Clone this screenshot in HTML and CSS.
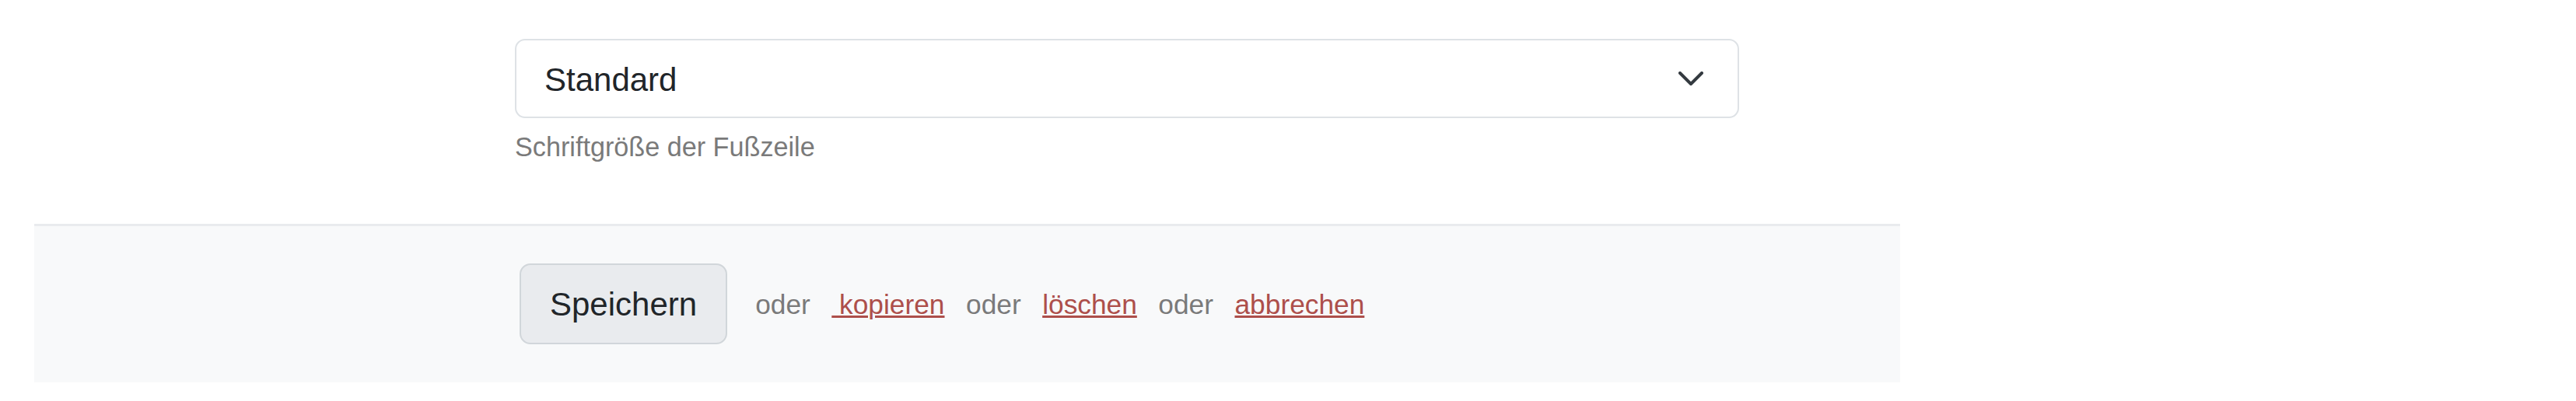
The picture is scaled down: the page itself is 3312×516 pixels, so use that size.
FILE: index.html
```html
<!DOCTYPE html>
<html lang="de">
<head>
<meta charset="utf-8">
<title>Fußzeile</title>
<link rel="stylesheet" href="styles.css">
</head>
<body>
<div class="page">
  <div class="form-row">
    <div class="label-col"></div>
    <div class="field-col">
      <div class="select">
        <span class="select-value">Standard</span>
        <svg class="chevron" width="32" height="18" viewBox="0 0 32 18" aria-hidden="true">
          <polyline points="2,2 16,16 30,2" fill="none" stroke="#343a40" stroke-width="4" stroke-linecap="round" stroke-linejoin="round"/>
        </svg>
      </div>
      <div class="form-text">Schriftgröße der Fußzeile</div>
    </div>
  </div>
  <div class="actions">
    <button class="btn" type="button">Speichern</button>
    <span class="or">oder</span>
    <a class="link" href="#">&nbsp;kopieren</a>
    <span class="or">oder</span>
    <a class="link" href="#">löschen</a>
    <span class="or">oder</span>
    <a class="link" href="#">abbrechen</a>
  </div>
</div>
</body>
</html>
```
FILE: styles.css
```css
html, body {
  margin: 0;
  padding: 0;
  background: #ffffff;
}
body {
  font-family: "Liberation Sans", Arial, Helvetica, sans-serif;
  color: #212529;
}
.page {
  padding: 50px 0 0 44px;
  width: 2399px;
}
.form-row {
  display: flex;
}
.label-col {
  width: 618px;
  flex: none;
}
.field-col {
  width: 1574px;
  flex: none;
}
.select {
  box-sizing: border-box;
  height: 102px;
  border: 2px solid #dee2e6;
  border-radius: 13px;
  background: #ffffff;
  display: flex;
  align-items: center;
  justify-content: space-between;
  padding: 0 44px 0 36px;
  font-size: 42px;
}
.select-value {
  line-height: 63px;
  position: relative;
  top: 1px;
}
.chevron {
  display: block;
  flex: none;
}
.form-text {
  margin-top: 12px;
  font-size: 34.2px;
  line-height: 50.4px;
  color: #7a7a7a;
}
.actions {
  margin-top: 74px;
  background: #f8f9fa;
  border-top: 3px solid #e9ebee;
  padding: 48px 0 49px 624px;
  display: flex;
  align-items: center;
  gap: 27.5px;
  font-size: 35.3px;
  line-height: 53px;
}
.btn {
  box-sizing: border-box;
  height: 104px;
  padding: 0 37px;
  margin-right: 8.5px;
  font-family: "Liberation Sans", Arial, Helvetica, sans-serif;
  font-size: 42px;
  line-height: 63px;
  color: #212529;
  background: #e9ebee;
  border: 2px solid #d1d6da;
  border-radius: 14px;
}
.or {
  color: #7a7a7a;
}
.link {
  color: #ad4f4b;
  text-decoration: underline;
  text-decoration-thickness: 3px;
  text-underline-offset: 2px;
}
```
